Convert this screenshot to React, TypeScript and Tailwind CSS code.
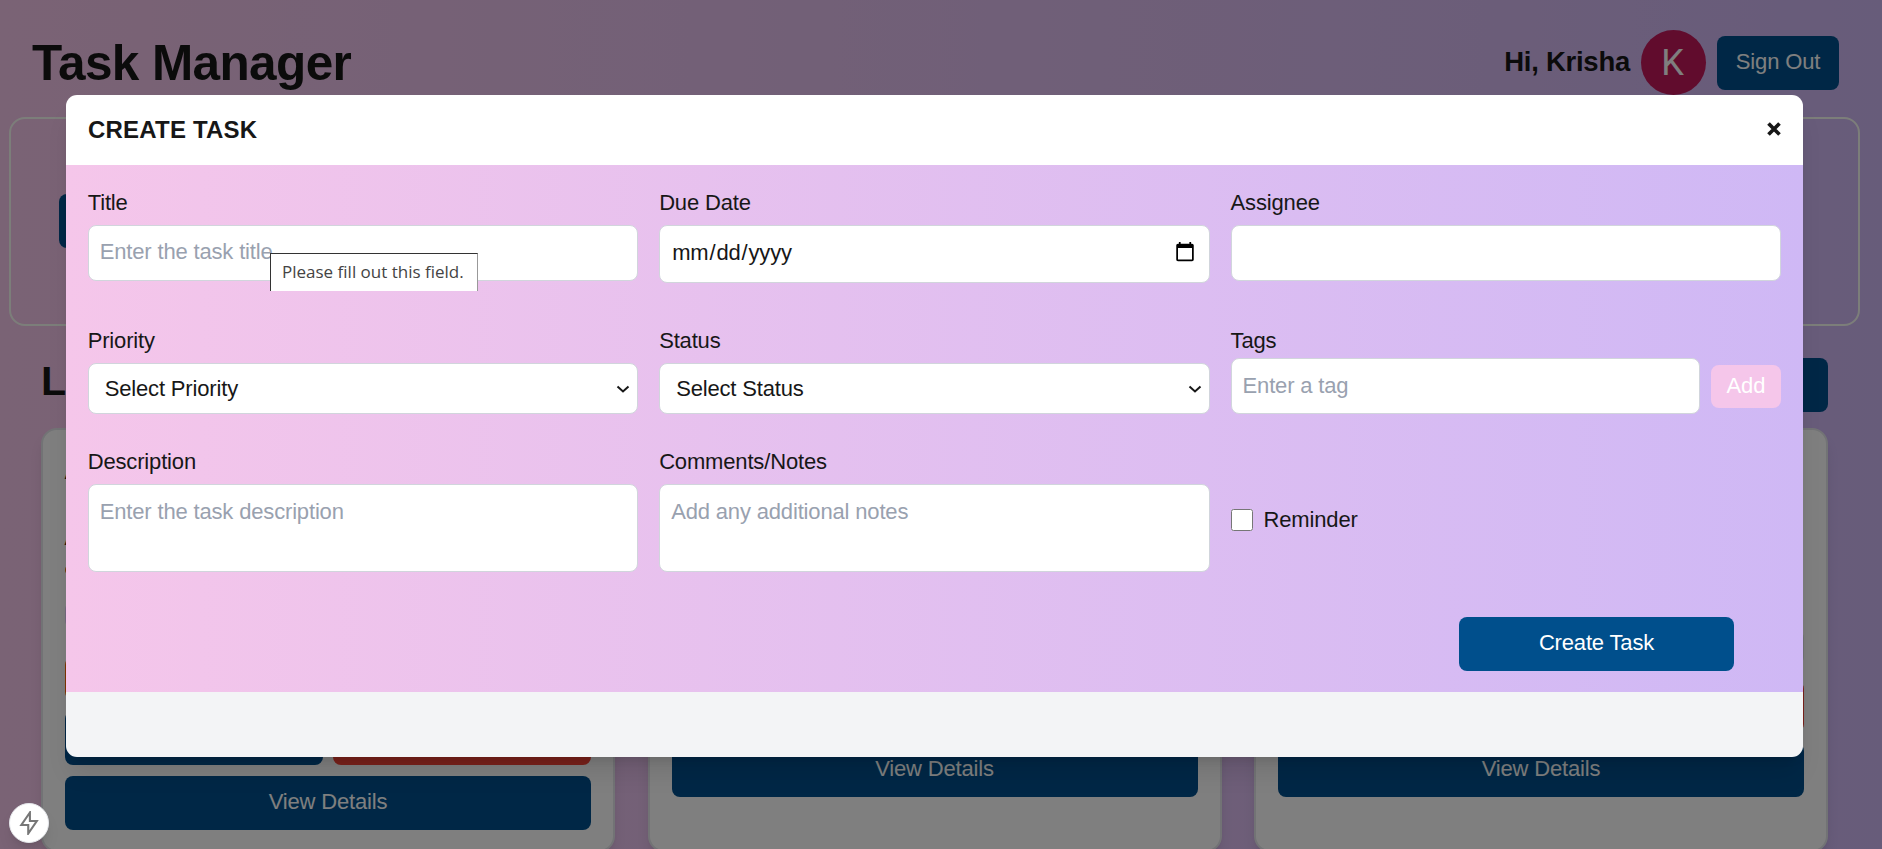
import type { ReactNode } from "react";

const inputBase =
  "block w-full rounded-[8px] border border-gray-300 bg-white text-[22px] leading-[33px] tracking-[-0.16px] text-[#171717] placeholder:text-gray-400 outline-none";

function Field({ label, children, gap = true }: { label: string; children: ReactNode; gap?: boolean }) {
  return (
    <div className="flex flex-col">
      <label className="h-[33px] text-[22px] leading-[31px] tracking-[-0.16px]">{label}</label>
      <div className={gap ? "mt-[5px]" : ""}>{children}</div>
    </div>
  );
}

function Select({ text }: { text: string }) {
  return (
    <div className="flex h-[51px] items-center justify-between rounded-[8px] border border-gray-300 bg-white pr-[7px] pl-[16px] text-[22px] tracking-[-0.16px]">
      <span className="-mt-px">{text}</span>
      <svg width="14" height="14" viewBox="0 0 14 14" fill="none" stroke="#171717" strokeWidth="2">
        <path d="M1.5 4.500 7 9.500l5.500-5" />
      </svg>
    </div>
  );
}

function Card({ children }: { children: ReactNode }) {
  return (
    <div className="flow-root h-[424px] rounded-[16px] border-2 border-gray-200 bg-white px-[22px] shadow-lg">
      {children}
    </div>
  );
}

function NavyButton({ children, className }: { children?: ReactNode; className: string }) {
  return (
    <div
      className={
        "flex h-[54px] items-center justify-center rounded-[8px] bg-[#004f8c] text-[22px] tracking-[-0.16px] text-white " +
        className
      }
    >
      <span className="-mt-[3px]">{children}</span>
    </div>
  );
}

function Dashboard() {
  return (
    <div className="h-[849px] w-[1882px] overflow-hidden bg-linear-to-r from-[#f5c6ea] to-[#cfb8f5]">
      <header className="flex h-[117px] items-start justify-between pr-[43px] pl-[32px]">
        <h1 className="mt-[35px] text-[49.500px] leading-[56px] font-bold tracking-[-0.6px] text-[#171717]">
          Task Manager
        </h1>
        <div className="mt-[30px] flex items-center gap-[11px]">
          <span className="-mt-[2px] text-[27.500px] font-bold tracking-[-0.25px] text-[#171717]">Hi, Krisha</span>
          <div className="flex size-[65px] items-center justify-center rounded-full bg-[#c2185b] pr-[2px] font-[Roboto] text-[36px] text-white">
            K
          </div>
          <NavyButton className="w-[122px]">Sign Out</NavyButton>
        </div>
      </header>
      <section className="ml-[9px] h-[209px] w-[1851px] rounded-[16px] border-2 border-[#f9fcf5] pt-[75px] pl-[48px]">
        <NavyButton className="w-[260px]" />
      </section>
      <section className="mt-[32px] ml-[41px] w-[1787px]">
        <div className="flex h-[70px] items-start justify-between">
          <h2 className="text-[41.250px] leading-[46px] font-bold text-[#171717]">L</h2>
          <NavyButton className="w-[200px]" />
        </div>
        <div className="grid grid-cols-3 gap-[32.500px]">
          <Card>
            <p className="mt-[25px] -ml-px text-[27.500px] leading-[30px] font-bold text-[#171717]">A</p>
            <p className="mt-[36px] -ml-px text-[22px] leading-[33px] font-bold text-[#5c2a12]">A</p>
            <div className="mt-[10px] size-[12px] rounded-full bg-amber-600" />
            <div className="mt-[27px] h-[24px] w-[80px] rounded-[6px] bg-purple-200" />
            <div className="mt-[30px] h-[43px] w-[200px] rounded-[8px] bg-orange-500" />
            <div className="mt-[11px] grid grid-cols-2 gap-[10px]">
              <NavyButton className="" />
              <div className="h-[54px] rounded-[8px] bg-[#f44336]" />
            </div>
            <NavyButton className="mt-[11px]">View Details</NavyButton>
          </Card>
          <Card>
            <NavyButton className="mt-[313px]">View Details</NavyButton>
          </Card>
          <Card>
            <div className="mt-[200px] h-[35px] rounded-[8px] bg-gray-200" />
            <div className="mt-[16px] h-[51px] rounded-[8px] bg-[#f44336]" />
            <NavyButton className="mt-[11px]">View Details</NavyButton>
          </Card>
        </div>
      </section>
    </div>
  );
}

function CreateTaskModal() {
  return (
    <div className="absolute top-[95px] left-[66px] w-[1737px] overflow-hidden rounded-[11px] text-[#171717] shadow-xl">
      <div className="flex h-[70px] items-center justify-between bg-white px-[22px]">
        <h2 className="-mt-px text-[24px] leading-[30px] font-bold tracking-[0.2px]">CREATE TASK</h2>
        <svg className="-mt-[3px]" width="14" height="14" viewBox="0 0 14 14" stroke="#171717" strokeWidth="3.700">
          <path d="M1.500 1.500l11 11M12.500 1.500l-11 11" />
        </svg>
      </div>
      <form className="h-[527px] bg-linear-to-r from-[#f5c6ea] to-[#cfb8f5] pt-[22px] pr-[22px] pl-[21.700px]">
        <div className="grid grid-cols-3 grid-rows-[138px_121px_171px] gap-x-[21px]">
          <Field label="Title">
            <input className={inputBase + " h-[56px] px-[11px] pb-[3px]"} placeholder="Enter the task title" />
          </Field>
          <Field label="Due Date">
            <input type="date" className={inputBase + " h-[58px] px-[11px] pb-[4px]"} />
          </Field>
          <Field label="Assignee">
            <input className={inputBase + " h-[56px] px-[11px]"} />
          </Field>
          <Field label="Priority">
            <Select text="Select Priority" />
          </Field>
          <Field label="Status">
            <Select text="Select Status" />
          </Field>
          <Field label="Tags" gap={false}>
            <div className="flex items-center gap-[11px]">
              <input className={inputBase + " h-[56px] flex-1 px-[11px] pb-[1px]"} placeholder="Enter a tag" />
              <button
                type="button"
                className="flex h-[43px] w-[70px] items-center justify-center rounded-[8px] bg-[#f5c6ea] pb-[2px] text-[22px] text-white"
              >
                Add
              </button>
            </div>
          </Field>
          <Field label="Description">
            <textarea
              className={inputBase + " h-[88px] resize-none px-[11px] pt-[10px]"}
              placeholder="Enter the task description"
            />
          </Field>
          <Field label="Comments/Notes">
            <textarea
              className={inputBase + " h-[88px] resize-none px-[11px] pt-[10px]"}
              placeholder="Add any additional notes"
            />
          </Field>
          <label className="mt-[57px] flex h-[33px] items-center gap-[11px] text-[22px] tracking-[-0.16px]">
            <input type="checkbox" className="size-[22px]" />
            <span className="-mt-px">Reminder</span>
          </label>
        </div>
        <div className="flex justify-end pr-[47px]">
          <NavyButton className="w-[275px]">Create Task</NavyButton>
        </div>
      </form>
      <div className="h-[65px] bg-gray-100" />
    </div>
  );
}

export default function App() {
  return (
    <div className="relative h-[849px] w-[1882px] overflow-hidden font-['Liberation_Sans',Arial,sans-serif]">
      <Dashboard />
      <div className="absolute inset-0 bg-black/50" />
      <CreateTaskModal />
      <div className="absolute top-[253px] left-[270px] flex h-[38px] w-[208px] items-center border-t border-r border-l border-t-[#333] border-r-[#999] border-l-[#333] bg-white pb-px pl-[11px] font-['Open_Sans','Noto_Sans',sans-serif] text-[17px] whitespace-nowrap text-[#444]">
        Please fill out this field.
      </div>
      <div className="absolute top-[803px] left-[9px] flex size-[40px] items-center justify-center rounded-full border border-gray-200 bg-white shadow-lg">
        <svg width="24" height="24" viewBox="0 0 16 16" fill="none" stroke="#777" strokeWidth="1.400">
          <path d="M8.600 1 2.900 9.300h4.600v5.700l5.700-8.300H8.600z" />
        </svg>
      </div>
    </div>
  );
}
